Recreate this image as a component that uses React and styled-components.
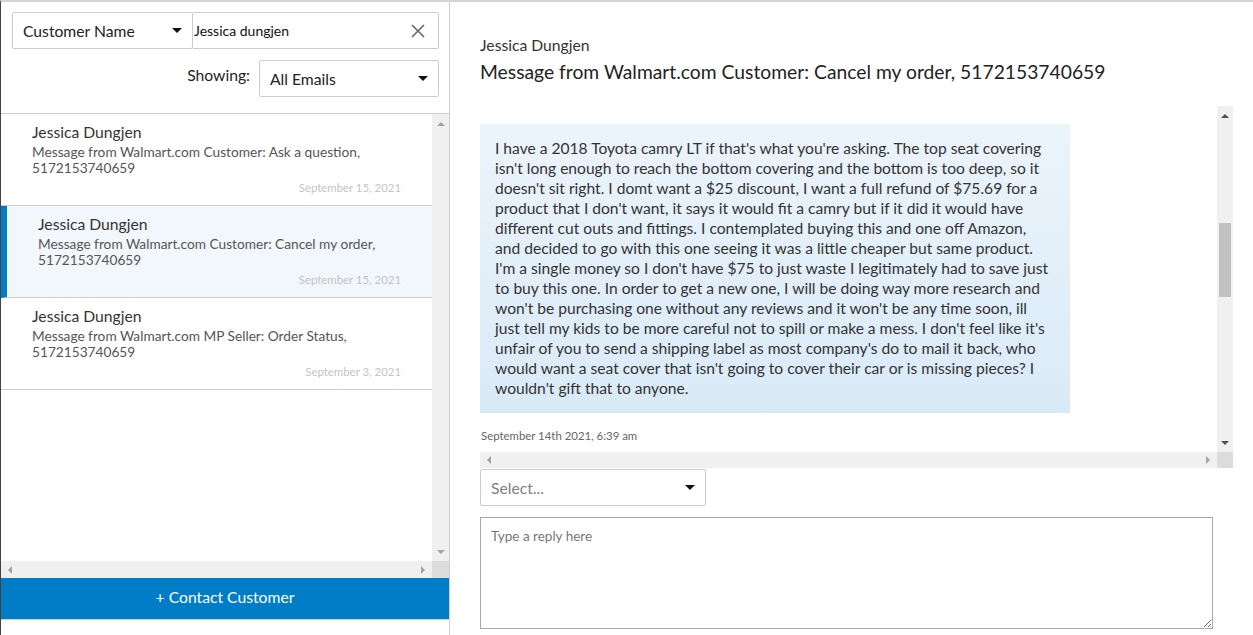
import React from "react";
import styled, { createGlobalStyle } from "styled-components";

const GlobalStyle = createGlobalStyle`
  html, body {
    margin: 0;
    padding: 0;
    background: white;
    font-family: Lato, "Open Sans", "Liberation Sans", sans-serif;
    color: #333;
  }
  * {
    box-sizing: border-box;
  }
`;

const Page = styled.div`
  display: flex;
  height: 635px;
  border-top: 2px solid #d4d4d4;
  border-left: 1px solid #444;
  overflow: hidden;
`;

const Sidebar = styled.aside`
  width: 449px;
  flex-shrink: 0;
  display: flex;
  flex-direction: column;
  border-right: 1px solid #cfcfcf;
`;

const Filters = styled.div`
  padding: 10px 10px 16px 11px;
  border-bottom: 1px solid #cfcfcf;
`;

const FilterRow = styled.div`
  display: flex;
  align-items: ${(props) => (props.end ? "flex-start" : "stretch")};
  justify-content: ${(props) => (props.end ? "flex-end" : "flex-start")};
  gap: ${(props) => (props.end ? "9px" : "0")};
  margin-top: ${(props) => (props.end ? "11px" : "0")};
`;

const SelectBox = styled.div`
  width: ${(props) => props.width}px;
  height: 37px;
  flex-shrink: 0;
  display: flex;
  align-items: center;
  justify-content: space-between;
  padding: 0 10px 0 10px;
  border: 1px solid #cccccc;
  border-radius: 2px;
  background: white;
  font-size: 15.7px;
  color: ${(props) => (props.placeholder ? "#808080" : "#222")};
`;

const Caret = styled.span`
  width: 0;
  height: 0;
  border-left: 5px solid transparent;
  border-right: 5px solid transparent;
  border-top: 5px solid #111;
`;

const SearchBox = styled.div`
  flex: 1;
  height: 37px;
  display: flex;
  align-items: center;
  justify-content: space-between;
  padding: 0 12px 0 1px;
  border: 1px solid #cccccc;
  border-left: none;
  border-radius: 0 2px 2px 0;
  font-size: 14px;
  color: #111;
`;

const ClearIcon = styled.svg`
  width: 16px;
  height: 16px;
`;

const ShowingLabel = styled.span`
  font-size: 15.7px;
  color: #222;
  margin-top: 6px;
`;

const ScrollFrame = styled.div`
  flex: 1;
  min-height: 0;
  display: grid;
  grid-template-columns: 1fr 17px;
  grid-template-rows: 1fr 17px;
`;

const ScrollContent = styled.div`
  overflow: hidden;
  min-width: 0;
  min-height: 0;
`;

const VBar = styled.div`
  background: #f0f0f0;
  display: flex;
  flex-direction: column;
  justify-content: space-between;
  align-items: center;
  padding: 8px 0 7px;
  position: relative;
`;

const HBar = styled.div`
  background: #f0f0f0;
  display: flex;
  justify-content: space-between;
  align-items: center;
  padding: 0 7px;
`;

const Corner = styled.div`
  background: #dcdcdc;
`;

const Arrow = styled.span`
  width: 0;
  height: 0;
  ${(props) => {
    const c = props.enabled ? "#505050" : "#a3a3a3";
    switch (props.dir) {
      case "up":
        return `border-left: 4px solid transparent; border-right: 4px solid transparent; border-bottom: 4px solid ${c};`;
      case "down":
        return `border-left: 4px solid transparent; border-right: 4px solid transparent; border-top: 4px solid ${c};`;
      case "left":
        return `border-top: 4px solid transparent; border-bottom: 4px solid transparent; border-right: 4px solid ${c};`;
      default:
        return `border-top: 4px solid transparent; border-bottom: 4px solid transparent; border-left: 4px solid ${c};`;
    }
  }}
`;

const Thumb = styled.div`
  position: absolute;
  left: 2px;
  right: 2px;
  top: ${(props) => props.top}px;
  height: ${(props) => props.size}px;
  background: #c1c1c1;
`;

const ConvItem = styled.div`
  padding: 8px 31px 10px 31px;
  border-bottom: 1px solid #cfcfcf;
  border-left: ${(props) => (props.active ? "6px solid #007dc6" : "none")};
  background: ${(props) => (props.active ? "#f2f7fb" : "white")};
  height: 92px;
`;

const ConvName = styled.div`
  font-size: 15.7px;
  line-height: 20px;
  color: #333;
  margin-bottom: 2px;
`;

const ConvSubject = styled.div`
  font-size: 13.7px;
  line-height: 16px;
  color: #555;
`;

const ConvDate = styled.div`
  font-size: 11.4px;
  line-height: 14px;
  text-align: right;
  color: #c4c4c4;
  margin-top: 5px;
`;

const ContactButton = styled.button`
  height: 42px;
  border: none;
  border-bottom: 1px solid #cfcfcf;
  background: #007dc6;
  color: white;
  font-family: inherit;
  font-size: 15.7px;
  padding: 0 0 3px;
  width: 100%;
  flex-shrink: 0;
`;

const SidebarFooter = styled.div`
  height: 15px;
  flex-shrink: 0;
`;

const Main = styled.main`
  flex: 1;
  display: flex;
  flex-direction: column;
  padding: 33px 20px 5px 30px;
  min-width: 0;
`;

const Customer = styled.div`
  font-size: 15.7px;
  line-height: 20px;
  color: #333;
`;

const Subject = styled.h1`
  margin: 5px 0 0;
  font-weight: 400;
  font-size: 19.3px;
  line-height: 24px;
  color: #222;
`;

const MessageFrame = styled(ScrollFrame)`
  flex: none;
  height: 362px;
  margin-top: 22px;
  grid-template-columns: 1fr 16px;
  grid-template-rows: 1fr 16px;
`;

const Bubble = styled.div`
  width: 590px;
  margin-top: 18px;
  padding: 14px 15px 15px;
  background: linear-gradient(#ecf4fb, #d9eaf7);
  font-size: 15.6px;
  line-height: 20px;
  color: #333;
`;

const MessageDate = styled.div`
  font-size: 11.4px;
  line-height: 14px;
  color: #666;
  margin-top: 16px;
  padding-left: 1px;
`;

const ReplyControls = styled.div`
  display: flex;
  flex-direction: column;
  margin-top: 1px;
`;

const ReplyArea = styled.textarea`
  display: block;
  width: 733px;
  height: 112px;
  margin-top: 11px;
  padding: 10px;
  border: 1px solid #a9a9a9;
  font-family: inherit;
  font-size: 13.5px;
  color: #333;
  &::placeholder {
    color: #777;
  }
`;

const conversations = [
  {
    subject: "Message from Walmart.com Customer: Ask a question,",
    date: "September 15, 2021",
  },
  {
    subject: "Message from Walmart.com Customer: Cancel my order,",
    date: "September 15, 2021",
    active: true,
  },
  {
    subject: "Message from Walmart.com MP Seller: Order Status,",
    date: "September 3, 2021",
  },
];

const messageText =
  "I have a 2018 Toyota camry LT if that's what you're asking. The top seat covering isn't long enough to reach the bottom covering and the bottom is too deep, so it doesn't sit right. I domt want a $25 discount, I want a full refund of $75.69 for a product that I don't want, it says it would fit a camry but if it did it would have different cut outs and fittings. I contemplated buying this and one off Amazon, and decided to go with this one seeing it was a little cheaper but same product. I'm a single money so I don't have $75 to just waste I legitimately had to save just to buy this one. In order to get a new one, I will be doing way more research and won't be purchasing one without any reviews and it won't be any time soon, ill just tell my kids to be more careful not to spill or make a mess. I don't feel like it's unfair of you to send a shipping label as most company's do to mail it back, who would want a seat cover that isn't going to cover their car or is missing pieces? I wouldn't gift that to anyone.";

export default function App() {
  return (
    <>
      <GlobalStyle />
      <Page>
        <Sidebar>
          <Filters>
            <FilterRow>
              <SelectBox width={181}>
                Customer Name
                <Caret />
              </SelectBox>
              <SearchBox>
                Jessica dungjen
                <ClearIcon viewBox="0 0 16 16">
                  <path
                    d="M2 2 L14 14 M14 2 L2 14"
                    stroke="#666"
                    strokeWidth="1.6"
                    fill="none"
                  />
                </ClearIcon>
              </SearchBox>
            </FilterRow>
            <FilterRow end>
              <ShowingLabel>Showing:</ShowingLabel>
              <SelectBox width={180}>
                All Emails
                <Caret />
              </SelectBox>
            </FilterRow>
          </Filters>
          <ScrollFrame>
            <ScrollContent>
              {conversations.map((c, i) => (
                <ConvItem key={i} active={c.active}>
                  <ConvName>Jessica Dungjen</ConvName>
                  <ConvSubject>
                    {c.subject}
                    <br />
                    5172153740659
                  </ConvSubject>
                  <ConvDate>{c.date}</ConvDate>
                </ConvItem>
              ))}
            </ScrollContent>
            <VBar>
              <Arrow dir="up" />
              <Arrow dir="down" />
            </VBar>
            <HBar>
              <Arrow dir="left" />
              <Arrow dir="right" />
            </HBar>
            <Corner />
          </ScrollFrame>
          <ContactButton>+ Contact Customer</ContactButton>
          <SidebarFooter />
        </Sidebar>
        <Main>
          <Customer>Jessica Dungjen</Customer>
          <Subject>
            Message from Walmart.com Customer: Cancel my order, 5172153740659
          </Subject>
          <MessageFrame>
            <ScrollContent>
              <Bubble>{messageText}</Bubble>
              <MessageDate>September 14th 2021, 6:39 am</MessageDate>
            </ScrollContent>
            <VBar>
              <Arrow dir="up" enabled />
              <Thumb top={117} size={74} />
              <Arrow dir="down" enabled />
            </VBar>
            <HBar>
              <Arrow dir="left" />
              <Arrow dir="right" />
            </HBar>
            <Corner />
          </MessageFrame>
          <ReplyControls>
            <SelectBox width={226} placeholder>
              Select...
              <Caret />
            </SelectBox>
            <ReplyArea placeholder="Type a reply here" />
          </ReplyControls>
        </Main>
      </Page>
    </>
  );
}
